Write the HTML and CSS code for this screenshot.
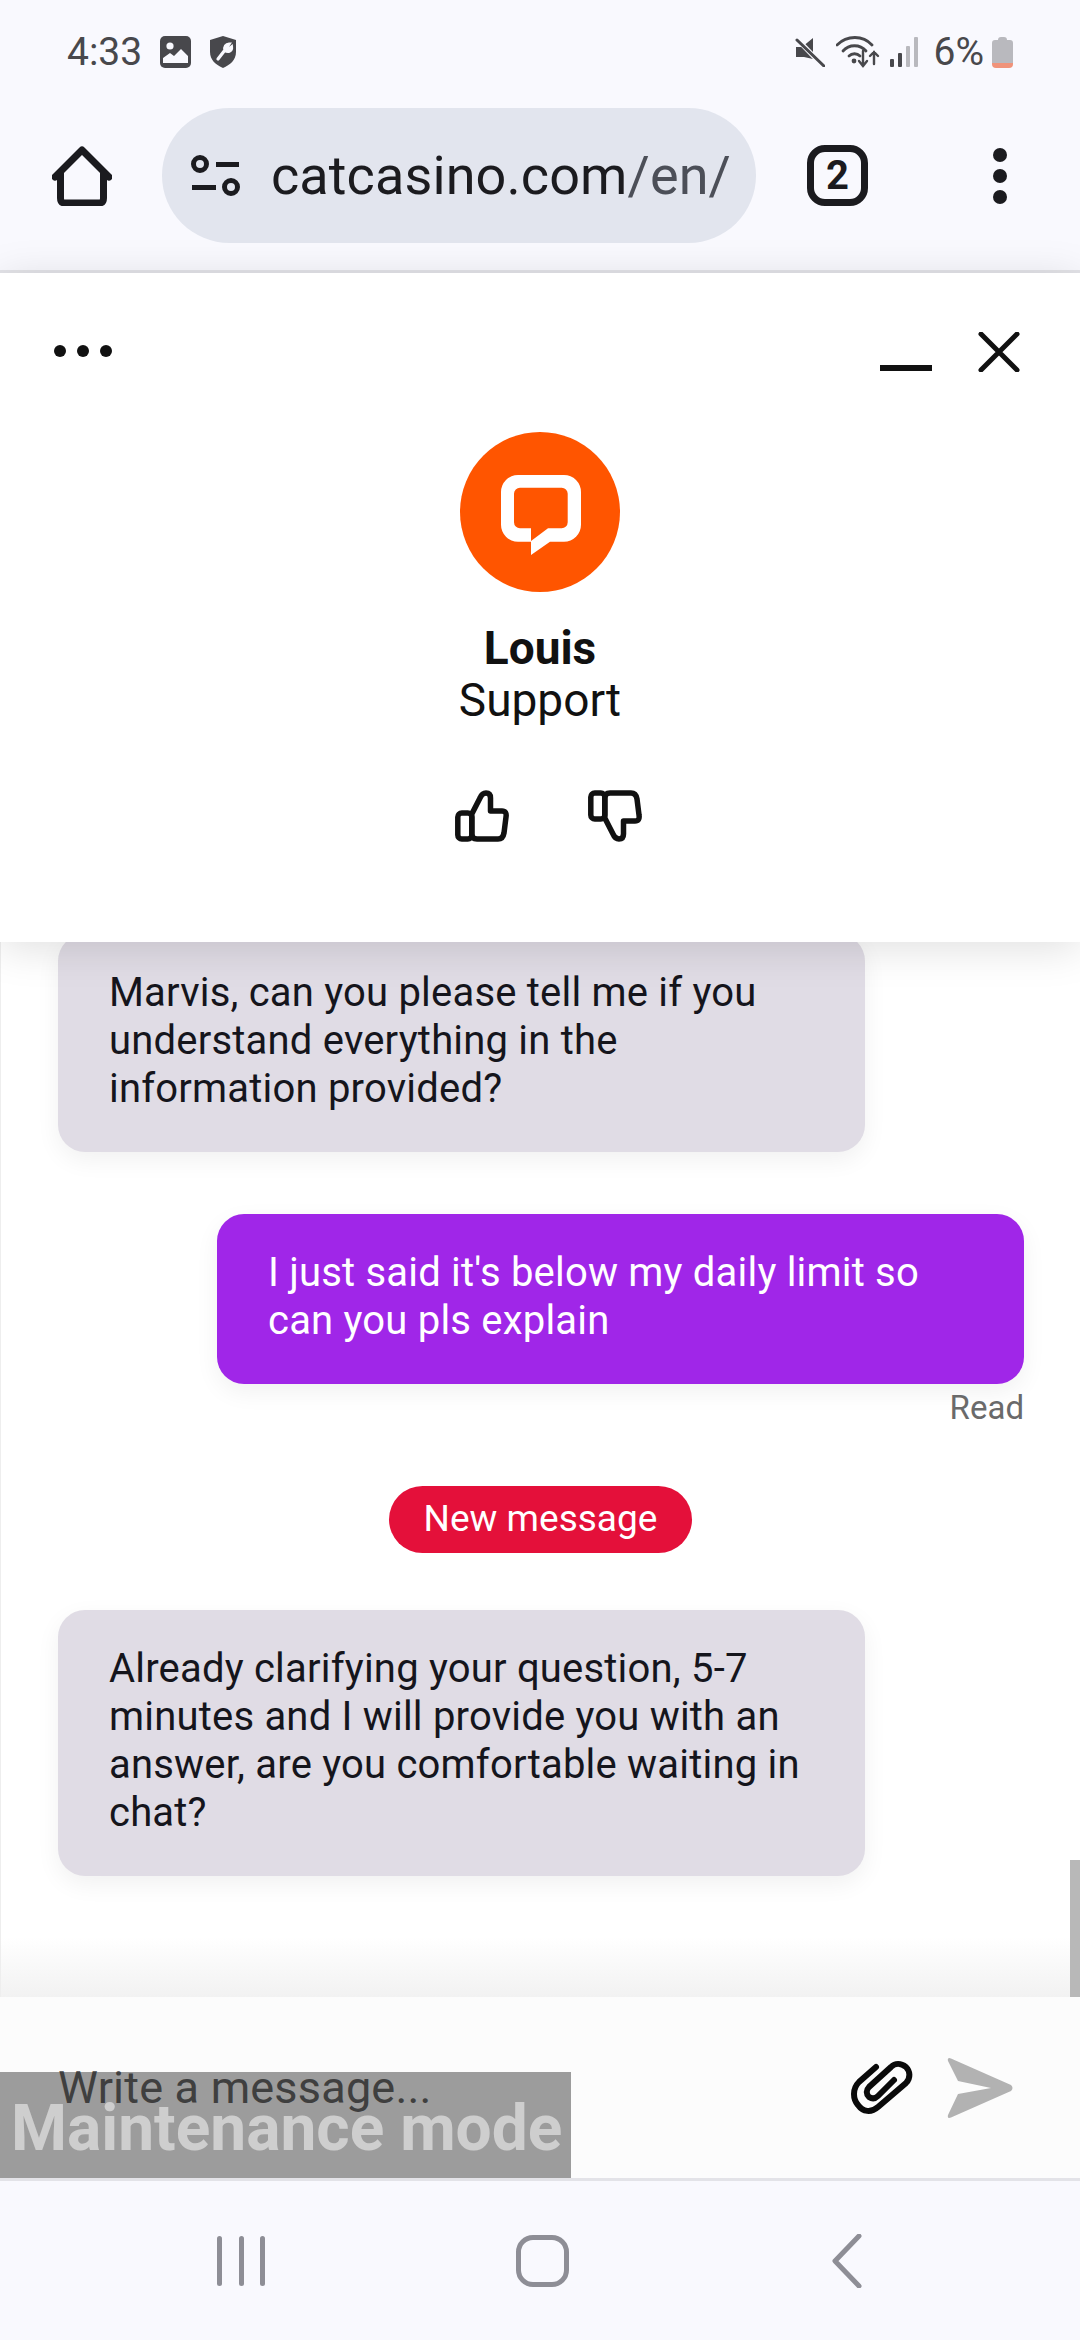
FILE: index.html
```html
<!DOCTYPE html>
<html lang="en">
	<head>
		<meta charset="UTF-8" />
		<meta name="viewport" content="width=device-width, initial-scale=1.0" />
		<title>catcasino.com chat</title>
		<link rel="stylesheet" href="styles.css">
	</head>
	<body>
		<div class="status-bar">
			<span class="clock">4:33</span>
			<svg class="st-image" width="31" height="32" viewBox="0 0 31 32">
				<rect width="31" height="32" rx="5" fill="#48484c"/>
				<circle cx="10" cy="10" r="3.6" fill="#f9f9fe"/>
				<path d="M3 27 V22 L10 17 L14 20 L21 13 L28 20 V27 Z" fill="#f9f9fe"/>
			</svg>
			<svg class="st-shield" width="26" height="32" viewBox="0 0 26 32">
				<path d="M13 0 L26 4 V16 C26 24 20 29 13 32 C6 29 0 24 0 16 V4 Z" fill="#48484c"/>
				<path d="M8 23 L15 14 M15 14 C14 11 16 8 19 8 L17 11 L19 13 L21.500 11 C22 15 18 17 15 14" stroke="#f9f9fe" stroke-width="3.200" fill="#f9f9fe" stroke-linecap="round"/>
			</svg>
			<span class="status-spacer"></span>
			<svg class="st-mute" width="30" height="30" viewBox="0 0 30 30">
				<path d="M1 10 H7 L18 1 V22 L9 20 H1 Z" fill="#48484c"/>
				<path d="M2 2 L28 29" stroke="#f9f9fe" stroke-width="5"/>
				<path d="M2 3 L29 29" stroke="#48484c" stroke-width="3" stroke-linecap="round"/>
			</svg>
			<svg class="st-wifi" width="44" height="32" viewBox="0 0 44 32">
				<g fill="none" stroke="#48484c" stroke-width="2.800" stroke-linecap="round">
					<path d="M1 9 C11 -1 27 -1 36 9"/>
					<path d="M7 15 C13 8 24 8 30 15"/>
					<path d="M13 20 C16 17 21 17 24 20"/>
					<path d="M27 15 V30 M23 25 L27 30 L31 25" stroke-width="2.400"/>
					<path d="M38 16 V28 M34 20 L38 16 L42 20" stroke-width="2.400"/>
				</g>
				<circle cx="18" cy="25" r="2.400" fill="#48484c"/>
			</svg>
			<svg class="st-signal" width="28" height="30" viewBox="0 0 28 30">
				<rect x="0" y="22" width="4" height="8" rx="1" fill="#48484c"/>
				<rect x="8" y="16" width="4" height="14" rx="1" fill="#48484c"/>
				<rect x="16" y="9" width="4" height="21" rx="1" fill="#b9b9be"/>
				<rect x="24" y="0" width="4" height="30" rx="1" fill="#b9b9be"/>
			</svg>
			<span class="battery-text">6%</span>
			<svg class="st-battery" width="21" height="31" viewBox="0 0 21 31">
				<path d="M6 3 Q6 0 9 0 H12 Q15 0 15 3 H18 Q21 3 21 6 V26 H0 V6 Q0 3 3 3 Z" fill="#b9b9be"/>
				<path d="M0 26 H21 V27 Q21 31 17 31 H4 Q0 31 0 27 Z" fill="#f0937a"/>
			</svg>
		</div>

		<div class="toolbar">
			<svg class="tb-home" width="60" height="60" viewBox="0 0 60 60">
				<g fill="none" stroke="#1b1b1f" stroke-width="7" stroke-linecap="round" stroke-linejoin="round">
					<path d="M3 31 L30 4 L57 31"/>
					<path d="M8.500 27 V52 Q8.500 57 13 57 H47 Q51.500 57 51.500 52 V27"/>
				</g>
			</svg>
			<div class="url-pill">
				<svg class="url-icon" width="50" height="42" viewBox="0 0 50 42">
					<g fill="none" stroke="#1b1b1f" stroke-width="5">
						<circle cx="9" cy="9" r="6.500"/>
						<circle cx="40" cy="32" r="6.500"/>
					</g>
					<rect x="25" y="7" width="23" height="5" fill="#1b1b1f"/>
					<rect x="1" y="30" width="24" height="5" fill="#1b1b1f"/>
				</svg>
				<span class="url-text">catcasino.com<span class="url-path">/en/</span></span>
			</div>
			<div class="tab-count">2</div>
			<div class="kebab">
				<span class="kebab-dot"></span>
				<span class="kebab-dot"></span>
				<span class="kebab-dot"></span>
			</div>
		</div>

		<div class="chat-head">
			<div class="head-top">
				<div class="more-dots">
					<span class="more-dot"></span>
					<span class="more-dot"></span>
					<span class="more-dot"></span>
				</div>
				<span class="head-minimize"></span>
				<svg class="head-close" width="42" height="40" viewBox="0 0 42 40">
					<path d="M3 2 L39 38 M39 2 L3 38" stroke="#111" stroke-width="5" stroke-linecap="round"/>
				</svg>
			</div>
			<svg class="avatar" width="160" height="160" viewBox="0 0 160 160">
				<circle cx="80" cy="80" r="80" fill="#ff5500"/>
				<path d="M71 109.700 H58 a17 17 0 0 1 -17 -17 V60 a17 17 0 0 1 17 -17 H104 a17 17 0 0 1 17 17 V92.700 a17 17 0 0 1 -17 17 H90 L71 123 V109 L88 96.300 H101.700 a6 6 0 0 0 6 -6 V61.700 a6 6 0 0 0 -6 -6 H60 a6 6 0 0 0 -6 6 V90.300 a6 6 0 0 0 6 6 H71 Z" fill="#fff"/>
			</svg>
			<div class="agent-name">Louis</div>
			<div class="agent-role">Support</div>
			<div class="rating">
				<svg width="54" height="52" viewBox="0 0 54 52">
					<g fill="none" stroke="#111" stroke-width="5.500" stroke-linejoin="round">
						<rect x="2.800" y="23" width="14" height="26" rx="4"/>
						<path d="M16.800 24 L25 8 Q27 3 31 3 Q35.500 3 35.500 8 V21 H47 Q52 21 51 27 L49 43 Q48 49 43 49 H22 Q16.800 49 16.800 44 Z"/>
					</g>
				</svg>
				<svg width="54" height="52" viewBox="0 0 54 52">
					<g transform="matrix(1 0 0 -1 0 52)" fill="none" stroke="#111" stroke-width="5.500" stroke-linejoin="round">
						<rect x="2.800" y="23" width="14" height="26" rx="4"/>
						<path d="M16.800 24 L25 8 Q27 3 31 3 Q35.500 3 35.500 8 V21 H47 Q52 21 51 27 L49 43 Q48 49 43 49 H22 Q16.800 49 16.800 44 Z"/>
					</g>
				</svg>
			</div>
		</div>

		<div class="chat-log">
			<div class="bubble bubble-in gap-out">Marvis, can you please tell me if you understand everything in the information provided?</div>
			<div class="bubble bubble-out">I just said it's below my daily limit so can you pls explain</div>
			<div class="read-mark">Read</div>
			<div class="new-badge">New message</div>
			<div class="bubble bubble-in">Already clarifying your question, 5-7 minutes and I will provide you with an answer, are you comfortable waiting in chat?</div>
			<span class="log-scrollbar"></span>
		</div>

		<div class="composer">
			<div class="composer-text">Write a message...</div>
			<svg class="clip-icon" width="62" height="54" viewBox="0 0 62 54">
				<path d="M25 6 L8 21 C1 28 2 38 7 44 C12 51 20 52 27 46 L55 22 C60 17 59 10 55 6 C50 2 44 2 40 6 L18 26 C15 29 15 33 18 36 C21 38 24 38 27 35 L43 19" fill="none" stroke="#0a0a0a" stroke-width="6" stroke-linecap="round"/>
			</svg>
			<svg class="send-icon" width="66" height="60" viewBox="0 0 66 60">
				<path d="M1 3 Q0 -1 4 0.500 L64 27 Q67 30 64 33 L4 59.500 Q0 61 1 57 L11 36 L44 30 L11 23 Z" fill="#b2b2b2"/>
			</svg>
			<div class="maintenance">Maintenance mode</div>
		</div>

		<div class="nav-bar">
			<div class="nav-recents">
				<span class="nav-line"></span>
				<span class="nav-line"></span>
				<span class="nav-line"></span>
			</div>
			<span class="nav-home"></span>
			<svg class="nav-back" width="30" height="54" viewBox="0 0 30 54">
				<path d="M27 2 L3 27 L27 52" fill="none" stroke="#8e8e96" stroke-width="5" stroke-linecap="round" stroke-linejoin="round"/>
			</svg>
		</div>
	</body>
</html>
```

FILE: styles.css
```css
* {
	box-sizing: border-box;
}
body {
	margin: 0;
	width: 1080px;
	height: 2340px;
	display: flex;
	flex-direction: column;
	overflow: hidden;
	font-family: Roboto, "Liberation Sans", sans-serif;
	background-color: #f9f9fe;
	color: #111;
}

/* status bar */
.status-bar {
	height: 108px;
	flex-shrink: 0;
	padding: 0 67px 4px 67px;
	display: flex;
	align-items: center;
	color: #48484c;
}
.clock {
	font-size: 39px;
	margin-right: 18px;
}
.st-image {
	margin-right: 19px;
}
.status-spacer {
	flex: 1;
}
.st-wifi {
	margin-left: 11px;
}
.st-signal {
	margin-left: 10px;
}
.battery-text {
	font-size: 39px;
	margin-left: 16px;
	margin-right: 8px;
}

/* browser toolbar */
.toolbar {
	height: 165px;
	flex-shrink: 0;
	padding: 0 0 27px 52px;
	display: flex;
	align-items: center;
	border-bottom: 3px solid #e3e3e8;
}
.url-pill {
	width: 594px;
	height: 135px;
	margin-left: 50px;
	padding-left: 29px;
	display: flex;
	align-items: center;
	border-radius: 68px;
	background-color: #e2e5ee;
}
.url-text {
	margin-left: 30px;
	font-size: 54px;
	letter-spacing: 0.1px;
	color: #1b1b1f;
	white-space: nowrap;
}
.url-path {
	color: #4c4f58;
}
.tab-count {
	width: 61px;
	height: 61px;
	margin-left: 51px;
	display: flex;
	align-items: center;
	justify-content: center;
	border: 7px solid #1b1b1f;
	border-radius: 18px;
	font-size: 40px;
	font-weight: 700;
	color: #1b1b1f;
}
.kebab {
	margin-left: 125px;
	display: flex;
	flex-direction: column;
	gap: 7px;
}
.kebab-dot {
	width: 14px;
	height: 14px;
	border-radius: 50%;
	background-color: #1b1b1f;
}

/* chat header */
.chat-head {
	height: 669px;
	flex-shrink: 0;
	display: flex;
	flex-direction: column;
	align-items: center;
	background-color: #fff;
	box-shadow: 0 6px 40px rgba(0, 0, 0, 0.13);
	position: relative;
	z-index: 2;
}
.head-top {
	align-self: stretch;
	height: 159px;
	padding: 59px 60px 0 54px;
	display: flex;
	align-items: flex-start;
}
.more-dots {
	margin-top: 13px;
	display: flex;
	gap: 11px;
	flex: 1;
}
.more-dot {
	width: 12px;
	height: 12px;
	border-radius: 50%;
	background-color: #111;
}
.head-minimize {
	width: 52px;
	height: 6px;
	margin-top: 33px;
	margin-right: 46px;
	background-color: #111;
}
.avatar {
	display: block;
}
.agent-name {
	margin-top: 30px;
	font-size: 46px;
	font-weight: 700;
	line-height: 52px;
}
.agent-role {
	font-size: 46px;
	line-height: 52px;
}
.rating {
	margin-top: 64px;
	margin-left: 17px;
	display: flex;
	gap: 79px;
}

/* messages */
.chat-log {
	flex: 1;
	min-height: 0;
	padding-bottom: 121px;
	display: flex;
	flex-direction: column;
	justify-content: flex-end;
	overflow: hidden;
	position: relative;
	background-color: #fff;
	border-left: 1px solid #eee;
}
.chat-log::after {
	content: "";
	position: absolute;
	left: 0;
	right: 0;
	bottom: 0;
	height: 60px;
	background: linear-gradient(#fff, #f2f2f2);
}
.bubble {
	width: 807px;
	padding: 35px 51px 39px 51px;
	flex-shrink: 0;
	border-radius: 27px;
	font-size: 40px;
	letter-spacing: 0.2px;
	line-height: 48px;
	box-shadow: 0 8px 24px rgba(0, 0, 0, 0.06);
}
.bubble-in {
	margin-left: 57px;
	background-color: #e0dce5;
	color: #15151c;
}
.bubble-out {
	margin-left: 216px;
	background-color: #a026e8;
	color: #fff;
}
.gap-out {
	margin-bottom: 62px;
}
.read-mark {
	height: 46px;
	flex-shrink: 0;
	padding: 1px 56px 0 0;
	text-align: right;
	font-size: 33px;
	line-height: 46px;
	color: #6a6a6a;
}
.new-badge {
	align-self: center;
	height: 67px;
	flex-shrink: 0;
	margin: 56px 0 57px 0;
	padding: 0 35px;
	border-radius: 34px;
	background-color: #e4103a;
	color: #fff;
	font-size: 37px;
	line-height: 65px;
}
.log-scrollbar {
	position: absolute;
	right: 0;
	bottom: 0;
	width: 10px;
	height: 137px;
	background-color: #b8b8b8;
	z-index: 1;
}

/* composer */
.composer {
	height: 184px;
	flex-shrink: 0;
	padding: 0 67px 0 58px;
	display: flex;
	align-items: center;
	position: relative;
	background-color: #fcfcfc;
	border-bottom: 3px solid #e3e3e8;
}
.composer-text {
	flex: 1;
	font-size: 45px;
	letter-spacing: 0.2px;
	color: #666;
}
.send-icon {
	margin-left: 34px;
}
.maintenance {
	position: absolute;
	left: 0;
	bottom: 0;
	width: 571px;
	height: 106px;
	padding: 22px 0 0 11px;
	background-color: rgba(0, 0, 0, 0.38);
	color: rgba(255, 255, 255, 0.5);
	font-size: 64px;
	font-weight: 700;
	line-height: 70px;
	white-space: nowrap;
}

/* android navigation */
.nav-bar {
	height: 159px;
	flex-shrink: 0;
	padding: 0 218px 0 217px;
	display: flex;
	align-items: center;
}
.nav-recents {
	width: 48px;
	height: 50px;
	display: flex;
	justify-content: space-between;
}
.nav-line {
	width: 5px;
	border-radius: 3px;
	background-color: #8e8e96;
}
.nav-home {
	width: 53px;
	height: 52px;
	margin-left: 251px;
	margin-right: 263px;
	border: 5px solid #8e8e96;
	border-radius: 17px;
}
```
